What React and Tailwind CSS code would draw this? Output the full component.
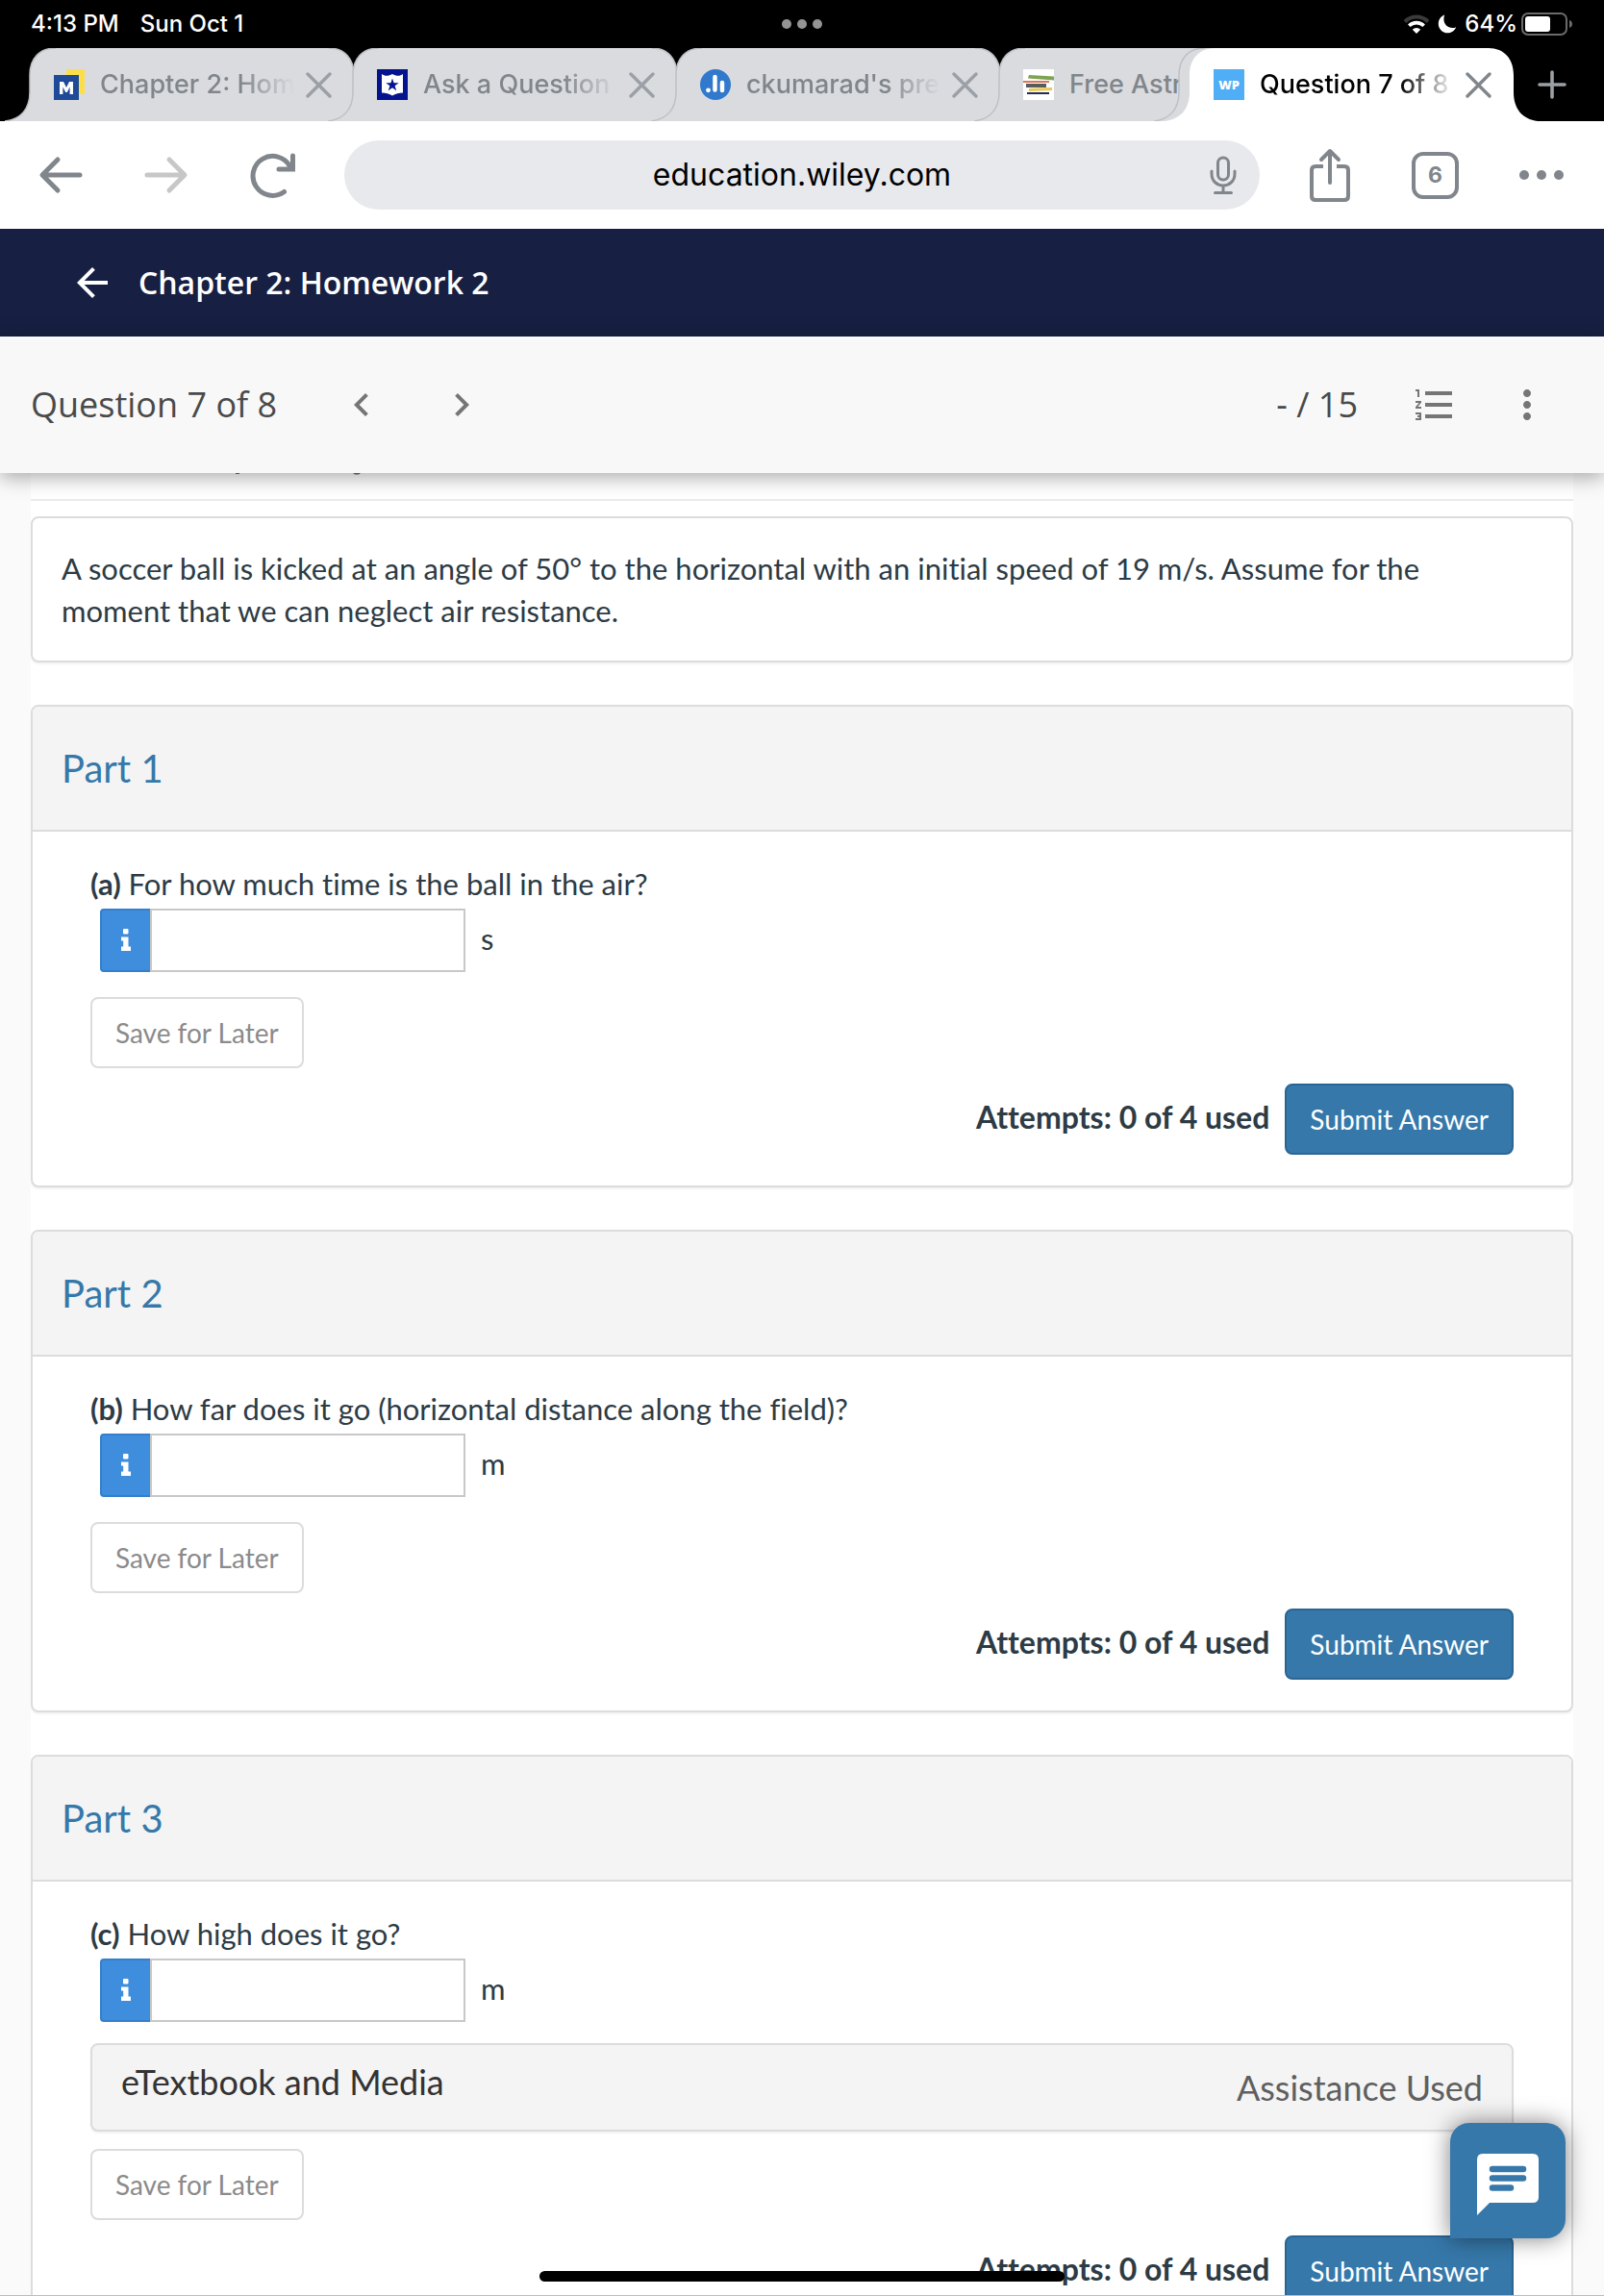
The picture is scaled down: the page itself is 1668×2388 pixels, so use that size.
import { MdArrowBack, MdChevronLeft, MdChevronRight, MdFormatListNumbered, MdMoreVert } from "react-icons/md";

function WifiIcon() {
  return (
    <svg viewBox="0 0 28 20" className="h-5 w-7" fill="none" aria-label="Wi-Fi">
      <path d="M2 7.5A17 17 0 0 1 26 7.5" stroke="#3a3a3a" strokeWidth="4" />
      <path d="M6.3 11.8a11 11 0 0 1 15.4 0" stroke="#fff" strokeWidth="3.6" />
      <path d="M14 20l-4.2-4.3a6 6 0 0 1 8.4 0z" fill="#fff" />
    </svg>
  );
}

function MoonIcon() {
  return (
    <svg viewBox="0 0 20 20" className="h-5 w-5" aria-label="Focus">
      <path d="M7.2.6C3.5 2 .8 5.400.8 9.700c0 5.300 4.200 9.600 9.500 9.600 4 0 7.500-2.500 8.900-6.100-1.100.6-2.500.9-3.800.9-5 0-9-4-9-9 0-1.600.3-3.200.8-4.500z" fill="#fff" />
    </svg>
  );
}

function BatteryIcon() {
  return (
    <svg viewBox="0 0 54 24" className="h-6 w-[54px]" fill="none" aria-label="Battery">
      <rect x="1" y="1" width="46" height="22" rx="6" stroke="#6b6b6b" strokeWidth="2" />
      <rect x="4" y="4" width="26" height="16" rx="3" fill="#fff" />
      <path d="M50 8c2 .6 3 2.200 3 4s-1 3.400-3 4z" fill="#6b6b6b" />
    </svg>
  );
}

function StatusBar() {
  return (
    <div className="grid h-[50px] grid-cols-3 items-center bg-black px-8 font-['Inter',sans-serif] text-2xl font-medium text-white">
      <div className="flex gap-[22px] leading-none">
        <span>4:13 PM</span>
        <span>Sun Oct 1</span>
      </div>
      <div className="flex justify-center gap-1.5">
        <span className="h-2.5 w-2.5 rounded-full bg-[#949494]" />
        <span className="h-2.5 w-2.5 rounded-full bg-[#949494]" />
        <span className="h-2.5 w-2.5 rounded-full bg-[#949494]" />
      </div>
      <div className="flex items-center justify-end leading-none">
        <WifiIcon />
        <span className="ml-2 mr-2">
          <MoonIcon />
        </span>
        <span className="mr-1">64%</span>
        <BatteryIcon />
      </div>
    </div>
  );
}

function TabShape({ active }) {
  return (
    <svg viewBox="0 0 388 76" className="pointer-events-none absolute -left-[26px] top-0 h-[76px] w-[388px] max-w-none" fill="none" aria-hidden="true">
      <path
        d="M0 76C17 74 26 63 26 46V28C26 11 36 0 53 0H337C353 0 363 11 363 28V46C363 63 372 74 388 76Z"
        className={active ? "fill-white" : "fill-[#dadbdf]"}
      />
      {!active && (
        <path d="M0 76C17 74 26 63 26 46V28C26 11 36 0 53 0M337 0C353 0 363 11 363 28" stroke="#bfc0c4" strokeWidth="1.5" />
      )}
    </svg>
  );
}

function CloseIcon() {
  return (
    <svg viewBox="0 0 27 27" className="h-[27px] w-[27px]" fill="none" stroke="currentColor" strokeWidth="3.4" strokeLinecap="round">
      <path d="M2 2l23 23M25 2L2 25" />
    </svg>
  );
}

function MLogo() {
  return (
    <svg viewBox="0 0 32 32" className="h-8 w-8 shrink-0" aria-hidden="true">
      <path d="M13 0h19v26H13z" fill="#fbde4a" />
      <path d="M0 6h26v26H0z" fill="#1e4a97" />
      <path d="M6 26V13h4l3 6 3-6h4v13h-3.400v-7.500L13.800 24h-1.600l-2.800-5.500V26z" fill="#fff" />
    </svg>
  );
}

function ShieldLogo() {
  return (
    <svg viewBox="0 0 32 32" className="h-8 w-8 shrink-0" aria-hidden="true">
      <path d="M0 0h32v32H0z" fill="#05148e" />
      <path d="M5 5c3 2.400 7 2.400 11 0 4 2.400 8 2.400 11 0v19.500c-4 .2-8 .8-11 3-3-2.200-7-2.800-11-3z" fill="#fff" />
      <path d="M16 9.500l1.600 4.800h5.100l-4.100 3 1.600 4.900-4.200-3-4.200 3 1.600-4.900-4.100-3h5.100z" fill="#05148e" />
    </svg>
  );
}

function ChartLogo() {
  return (
    <svg viewBox="0 0 32 32" className="h-8 w-8 shrink-0" aria-hidden="true">
      <circle cx="16" cy="16" r="16" fill="#3079cc" />
      <path d="M15.500 8v13.500M23 14v8" stroke="#fff" strokeWidth="4.500" strokeLinecap="round" />
      <circle cx="8.500" cy="21.800" r="2.400" fill="#fff" />
    </svg>
  );
}

function BooksLogo() {
  return (
    <svg viewBox="0 0 32 32" className="h-8 w-8 shrink-0" aria-hidden="true">
      <path d="M0 0h32v32H0z" fill="#fff" />
      <path d="M6 6l26 1.500v4L5 9.500z" fill="#7da453" />
      <path d="M0 12h27v2H0z" fill="#d9775a" />
      <path d="M3 15h21v4H3z" fill="#585c5a" />
      <path d="M6 20l24-1v3L6 23z" fill="#e8c953" />
      <path d="M4 24h23v2H4z" fill="#232c52" />
    </svg>
  );
}

function WpLogo() {
  return (
    <span className="flex h-8 w-8 shrink-0 items-center justify-center bg-[#4faef5] font-['Open_Sans',sans-serif] text-[13px] font-extrabold leading-none text-white">
      WP
    </span>
  );
}

function Tab({ icon, title, active }) {
  return (
    <div className="relative h-[76px] w-[336px] shrink-0">
      <TabShape active={active} />
      <div className="relative flex h-full items-center pl-[25px] pr-[22px]">
        {icon}
        <button
          type="button"
          className={
            "ml-4 mr-3 min-w-0 flex-1 overflow-hidden whitespace-nowrap text-left text-[27px] leading-8 [mask-image:linear-gradient(to_right,black_72%,transparent)] " +
            (active ? "text-black" : "text-[#80868b]")
          }
        >
          {title}
        </button>
        <button type="button" aria-label={"Close " + title} className={active ? "text-[#80868b]" : "text-[#9aa0a6]"}>
          <CloseIcon />
        </button>
      </div>
    </div>
  );
}

function TabStrip() {
  return (
    <div className="flex h-[76px] overflow-hidden bg-black pl-[31px] font-['Inter',sans-serif] font-medium">
      <Tab icon={<MLogo />} title="Chapter 2: Hom" />
      <Tab icon={<ShieldLogo />} title="Ask a Question" />
      <Tab icon={<ChartLogo />} title="ckumarad's pre" />
      <div className="relative h-[76px] w-[187px] shrink-0">
        <TabShape />
        <div className="relative flex h-full items-center overflow-hidden pl-[25px]">
          <BooksLogo />
          <button type="button" className="ml-4 min-w-0 flex-1 overflow-hidden whitespace-nowrap text-left text-[27px] leading-8 text-[#80868b]">
            Free Astr
          </button>
        </div>
      </div>
      <div className="relative h-[76px] w-[11px] shrink-0">
        <TabShape />
      </div>
      <Tab icon={<WpLogo />} title="Question 7 of 8" active />
      <div className="flex flex-1 items-center justify-center pr-3.5">
        <button type="button" aria-label="New tab" className="text-[#9aa0a6]">
          <svg viewBox="0 0 30 30" className="h-[30px] w-[30px]" fill="none" stroke="currentColor" strokeWidth="3.600" strokeLinecap="round">
            <path d="M15 2v26M2 15h26" />
          </svg>
        </button>
      </div>
    </div>
  );
}

function BrowserBar() {
  return (
    <div className="flex h-28 items-center bg-white pl-10 pr-[42px] font-['Inter',sans-serif] text-[#80868b]">
      <button type="button" aria-label="Back">
        <svg viewBox="0 0 46 40" className="h-10 w-[46px]" fill="none" stroke="currentColor" strokeWidth="5" strokeLinecap="round" strokeLinejoin="round">
          <path d="M20 4L4 20l16 16M5 20h38" />
        </svg>
      </button>
      <button type="button" aria-label="Forward" disabled className="ml-16 text-[#c7c7c7]">
        <svg viewBox="0 0 46 40" className="h-10 w-[46px]" fill="none" stroke="currentColor" strokeWidth="5" strokeLinecap="round" strokeLinejoin="round">
          <path d="M26 4l16 16-16 16M41 20H3" />
        </svg>
      </button>
      <button type="button" aria-label="Reload" className="ml-16">
        <svg viewBox="0 0 48 48" className="h-12 w-12" fill="none" stroke="currentColor" strokeWidth="5" strokeLinecap="round" strokeLinejoin="round">
          <path d="M35.500 41.500A20.500 20.500 0 1 1 41.500 15" />
          <path d="M44.500 4v14H30" strokeLinejoin="miter" />
        </svg>
      </button>
      <div className="relative ml-[50px] flex h-[72px] flex-1 items-center rounded-full bg-[#e8e9ed] px-6">
        <input
          aria-label="Address"
          defaultValue="education.wiley.com"
          className="w-full min-w-0 flex-1 bg-transparent pl-7 text-center text-[32px] leading-10 text-black outline-none"
        />
        <button type="button" aria-label="Voice search">
          <svg viewBox="0 0 28 40" className="h-10 w-7" fill="none" stroke="currentColor" strokeWidth="3" strokeLinecap="round">
            <rect x="8.500" y="2" width="11" height="23" rx="5.500" />
            <path d="M2 16v3c0 7 5.500 12 12 12s12-5 12-12v-3M14 31v7M5.500 38.500h17" />
          </svg>
        </button>
      </div>
      <button type="button" aria-label="Share" className="ml-[51px]">
        <svg viewBox="0 0 44 56" className="h-14 w-11" fill="none" stroke="currentColor" strokeWidth="4" strokeLinecap="round" strokeLinejoin="round">
          <path d="M15 19H7q-4 0-4 4v27q0 4 4 4h30q4 0 4-4V23q0-4-4-4h-8" strokeLinecap="butt" />
          <path d="M22 36V4M13 12l9-9 9 9" />
        </svg>
      </button>
      <button type="button" aria-label="6 open tabs" className="ml-[63px] flex h-[49px] w-[49px] items-center justify-center rounded-xl border-4 border-current text-[23px] font-bold leading-none">
        6
      </button>
      <button type="button" aria-label="More" className="ml-[63px] flex gap-2">
        <span className="h-2.5 w-2.5 rounded-full bg-current" />
        <span className="h-2.5 w-2.5 rounded-full bg-current" />
        <span className="h-2.5 w-2.5 rounded-full bg-current" />
      </button>
    </div>
  );
}

function CourseHeader() {
  return (
    <header className="flex h-28 items-center gap-6 bg-[#171f42] px-[72px] font-['Open_Sans',sans-serif] text-white">
      <a href="#back" aria-label="Back to assignments">
        <MdArrowBack className="h-12 w-12" />
      </a>
      <h1 className="text-[32px] font-semibold leading-10">Chapter 2: Homework 2</h1>
    </header>
  );
}

function QuestionBar() {
  return (
    <div className="relative z-10 flex h-[142px] items-center bg-[#f8f8f8] px-8 font-['Open_Sans',sans-serif] text-[36px] leading-[48px] text-[#4a4a4a] shadow-[0_4px_20px_rgba(0,0,0,0.35)]">
      <span>Question 7 of 8</span>
      <button type="button" aria-label="Previous question" className="ml-16 text-[#757575]">
        <MdChevronLeft className="h-12 w-12" />
      </button>
      <button type="button" aria-label="Next question" className="ml-14 text-[#757575]">
        <MdChevronRight className="h-12 w-12" />
      </button>
      <span className="ml-auto">- / 15</span>
      <button type="button" aria-label="Question list" className="ml-14 text-[#757575]">
        <MdFormatListNumbered className="h-12 w-12" />
      </button>
      <button type="button" aria-label="More options" className="ml-12 mr-6 text-[#757575]">
        <MdMoreVert className="h-12 w-12" />
      </button>
    </div>
  );
}

const parts = [
  { title: "Part 1", label: "(a)", text: "For how much time is the ball in the air?", unit: "s", id: "a" },
  { title: "Part 2", label: "(b)", text: "How far does it go (horizontal distance along the field)?", unit: "m", id: "b" },
  { title: "Part 3", label: "(c)", text: "How high does it go?", unit: "m", id: "c", media: true },
];

function Part({ title, label, text, unit, id, media }) {
  return (
    <section className="mt-11 rounded-lg border-2 border-[#dcdcdc] bg-white shadow-[0_2px_2px_rgba(0,0,0,0.05)]">
      <h2 className="flex h-[130px] items-center rounded-t-md border-b-2 border-[#dcdcdc] bg-[#f4f4f4] px-[30px] text-[40px] leading-[48px] text-[#3678aa]">
        {title}
      </h2>
      <div className="px-[60px] py-8">
        <label htmlFor={id} className="block text-[31px] leading-[44px]">
          <b>{label}</b> {text}
        </label>
        <div className="ml-2.5 mt-1 flex h-[66px] items-center">
          <button type="button" aria-label="Answer information" className="flex h-full w-[52px] items-center justify-center rounded-l border-2 border-r-0 border-[#357fcb] bg-[#3f8ddd]">
            <svg viewBox="0 0 12 24" className="h-6 w-3" fill="#fff" aria-hidden="true">
              <rect x="3" y="0" width="5.500" height="5.500" rx="1" />
              <path d="M1 8.500h7.500v10H11V23H1v-4.500h2.200V12.500H1z" />
            </svg>
          </button>
          <input id={id} type="text" className="h-full w-[328px] border-2 border-[#c8c8c8] bg-white px-3 text-[28px] outline-none" />
          <span className="ml-4 pb-1 text-[31px] leading-[44px]">{unit}</span>
        </div>
        {media && (
          <button type="button" className="mt-[22px] flex h-[92px] w-full items-center justify-between rounded-lg border-2 border-[#dcdcdc] bg-[#f4f4f4] px-[30px] text-[36px] leading-[44px] text-[#333] shadow-[0_2px_2px_rgba(0,0,0,0.05)]">
            <span className="pb-3">eTextbook and Media</span>
            <span className="text-[#5f5f5f]">Assistance Used</span>
          </button>
        )}
        <button type="button" className={(media ? "mt-[18px]" : "mt-[26px]") + " block h-[74px] rounded-lg border-2 border-[#dcdcdc] bg-white px-6 text-[28px] text-[#8b8b8b]"}>
          Save for Later
        </button>
        <div className="mt-4 flex items-center justify-end gap-4">
          <span className="pb-1 text-[32px] font-bold leading-10">Attempts: 0 of 4 used</span>
          <button type="button" className="h-[74px] rounded-lg border-2 border-[#2b6594] bg-[#3678aa] px-6 text-[28px] text-white">
            Submit Answer
          </button>
        </div>
      </div>
    </section>
  );
}

export default function App() {
  return (
    <div className="relative flex h-screen flex-col overflow-hidden bg-[#fafafa]">
      <StatusBar />
      <TabStrip />
      <BrowserBar />
      <CourseHeader />
      <QuestionBar />
      <main className="mx-8 min-h-0 flex-1 overflow-hidden bg-white font-['Lato',sans-serif] text-[#2d3b45] [font-variant-ligatures:none]">
        {/* The title line has scrolled under the bar; only its descenders still show. */}
        <div className="mb-4 h-[29px] border-b-2 border-[#ebebeb]">
          <svg viewBox="0 0 360 4" className="h-1 w-[360px]" fill="#6b6b6b" aria-hidden="true">
            <path d="M213 0h4v1h-4zM335 0h8l-2 1.500h-4z" />
          </svg>
        </div>
        <p className="rounded-lg border-2 border-[#dcdcdc] py-[30px] pl-[30px] pr-24 text-[31px] leading-[44px] shadow-[0_2px_2px_rgba(0,0,0,0.05)]">
          A soccer ball is kicked at an angle of 50° to the horizontal with an initial speed of 19 m/s. Assume for the moment that we can neglect air resistance.
        </p>
        {parts.map((part) => (
          <Part key={part.id} {...part} />
        ))}
      </main>
      <button
        type="button"
        aria-label="Open chat"
        className="absolute bottom-[60px] right-10 h-[120px] w-[120px] rounded-[20px] rounded-bl-none bg-[#3678aa] shadow-[0_0_24px_rgba(0,0,0,0.5)]"
      >
        <svg viewBox="0 0 120 120" className="h-full w-full" aria-hidden="true">
          <path d="M34 32h52q6 0 6 6v39q0 6-6 6H41L28 96V38q0-6 6-6z" fill="#fff" />
          <path d="M44 48h32M44 57.500h32M44 67.500h19" stroke="#3678aa" strokeWidth="6.500" strokeLinecap="round" />
        </svg>
      </button>
      <div className="absolute bottom-[15px] left-1/2 h-[11px] w-[546px] -translate-x-1/2 rounded-full bg-black" />
      <div className="absolute inset-x-0 bottom-0 h-px bg-[#bdbdbd]" />
    </div>
  );
}
